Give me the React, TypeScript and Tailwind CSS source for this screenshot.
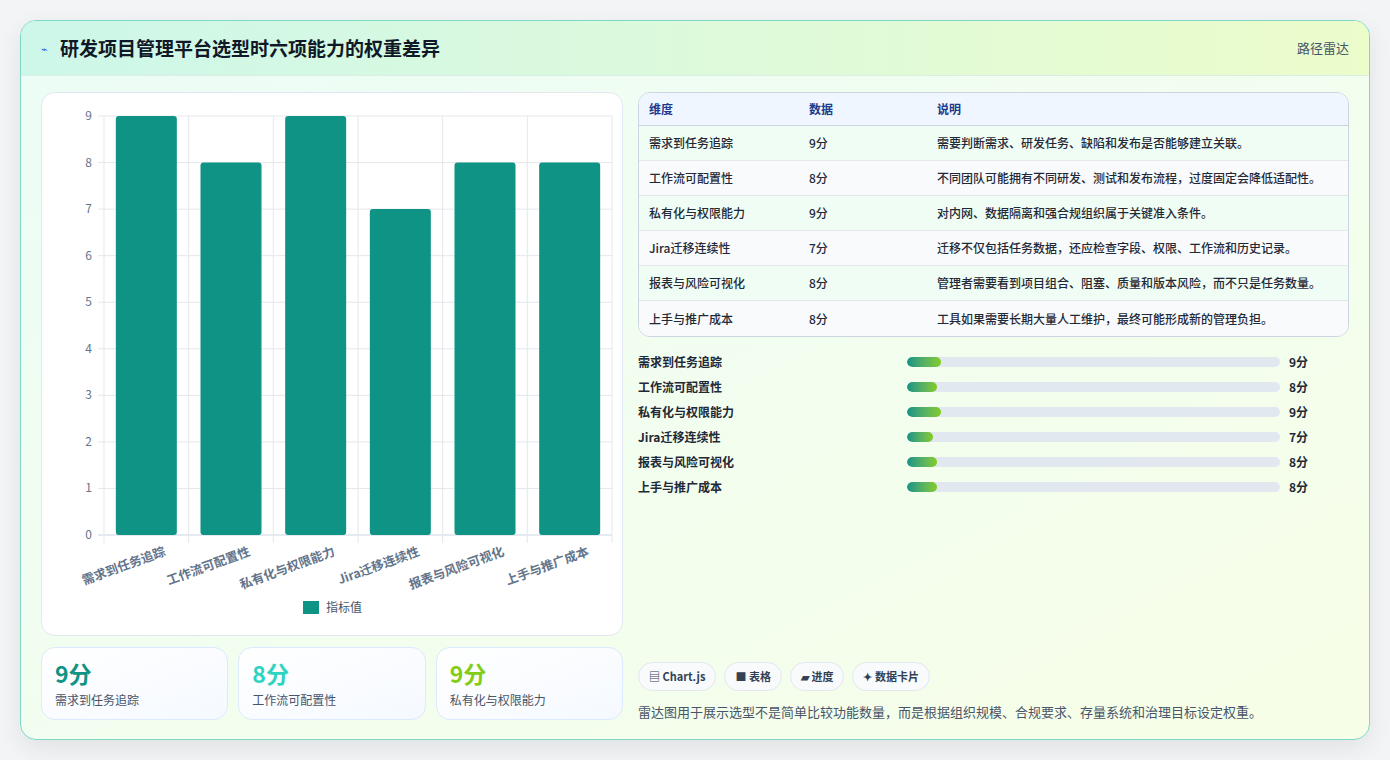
import React from "react";

const data = [
  { n: "需求到任务追踪", v: 9, d: "需要判断需求、研发任务、缺陷和发布是否能够建立关联。" },
  { n: "工作流可配置性", v: 8, d: "不同团队可能拥有不同研发、测试和发布流程，过度固定会降低适配性。" },
  { n: "私有化与权限能力", v: 9, d: "对内网、数据隔离和强合规组织属于关键准入条件。" },
  { n: "Jira迁移连续性", v: 7, d: "迁移不仅包括任务数据，还应检查字段、权限、工作流和历史记录。" },
  { n: "报表与风险可视化", v: 8, d: "管理者需要看到项目组合、阻塞、质量和版本风险，而不只是任务数量。" },
  { n: "上手与推广成本", v: 8, d: "工具如果需要长期大量人工维护，最终可能形成新的管理负担。" },
];

const font = { fontFamily: '"Noto Sans CJK SC", "Noto Sans", sans-serif' };

function Chart() {
  const L = 62, R = 570, T = 23, B = 442;
  const unit = (B - T) / 9;
  const cw = (R - L) / 6;
  return (
    <svg width="582" height="544" viewBox="0 0 582 544" style={font}>
      {Array.from({ length: 10 }).map((_, i) => {
        const y = B - i * unit;
        return (
          <g key={i}>
            <line x1={L - 6} x2={R} y1={y} y2={y} stroke={i === 0 ? "#cbd5e1" : "#e5e7eb"} />
            <text x={L - 12} y={y + 4} textAnchor="end" fontSize="12" fill="#64748b">{i}</text>
          </g>
        );
      })}
      {Array.from({ length: 7 }).map((_, i) => (
        <line key={i} x1={L + i * cw} x2={L + i * cw} y1={T} y2={B + 8} stroke="#e5e7eb" />
      ))}
      {data.map((d, i) => {
        const x = L + i * cw + (cw - 61) / 2;
        const h = d.v * unit;
        return <rect key={i} x={x} y={B - h} width="61" height={h} rx="3" fill="#0e9384" />;
      })}
      {data.map((d, i) => {
        const cx = L + i * cw + cw / 2 + 20;
        return (
          <text key={i} x={cx} y={B + 20} textAnchor="end" fontSize="12.5" fontWeight="600" fill="#64748b"
            transform={`rotate(-20 ${cx} ${B + 20})`}>{d.n}</text>
        );
      })}
      <rect x="261" y="508" width="16" height="13" fill="#0e9384" />
      <text x="284" y="519" fontSize="12" fill="#475569">指标值</text>
    </svg>
  );
}

export default function App() {
  return (
    <div className="w-[1390px] h-[760px] bg-[#f3f4f6] p-5 pb-5" style={font}>
      <div className="h-[720px] rounded-[16px] border border-[#7dd8c6] overflow-hidden flex flex-col shadow-[0_8px_24px_rgba(0,0,0,0.08)] bg-gradient-to-br from-[#ecfdf7] to-[#f7fee7]">
        <div className="h-[55px] shrink-0 flex items-center justify-between px-5 border-b border-[#d9efe6] bg-gradient-to-r from-[#cdf7ea] to-[#ecfccb]">
          <div className="flex items-center gap-3">
            <span className="text-[#2563eb] text-[11px]">⌁</span>
            <span className="text-[19px] font-bold text-[#111827]">研发项目管理平台选型时六项能力的权重差异</span>
          </div>
          <span className="text-[13px] text-[#475569]">路径雷达</span>
        </div>
        <div className="flex gap-[15px] px-5 pt-4 pb-[18px] flex-1">
          <div className="w-[582px] flex flex-col gap-[11px]">
            <div className="h-[544px] rounded-[14px] border border-[#e2e8f0] bg-white">
              <Chart />
            </div>
            <div className="grid grid-cols-3 gap-[10px]">
              {[["#0e9384", 0], ["#2dd4bf", 1], ["#84cc16", 2]].map(([c, i]) => (
                <div key={i as number} className="h-[73px] rounded-[14px] border border-[#dbeafe] bg-gradient-to-br from-white to-[#f5f9ff] px-[13px] pt-[10px]">
                  <div className="text-[23px] font-bold leading-[30px]" style={{ color: c as string }}>{data[i as number].v}分</div>
                  <div className="text-[12px] text-[#475569] mt-[3px]">{data[i as number].n}</div>
                </div>
              ))}
            </div>
          </div>
          <div className="flex-1 flex flex-col">
            <div className="rounded-[12px] border border-[#cbd5e1] overflow-hidden bg-white text-[12px]">
              <div className="flex h-[33px] items-center bg-[#eff6ff] border-b border-[#cbd5e1] text-[#1e3a8a] font-semibold">
                <div className="w-[170px] pl-[10px]">维度</div>
                <div className="w-[128px]">数据</div>
                <div>说明</div>
              </div>
              {data.map((d, i) => (
                <div key={i} className={`flex h-[35px] items-center text-[#1f2937] font-medium ${i < 5 ? "border-b border-[#e5e7eb]" : ""} ${i % 2 === 0 ? "bg-[#f0fdf4]" : "bg-[#f8fafc]"}`}>
                  <div className="w-[170px] pl-[10px]">{d.n}</div>
                  <div className="w-[128px]">{d.v}分</div>
                  <div>{d.d}</div>
                </div>
              ))}
            </div>
            <div className="mt-[12px] flex flex-col">
              {data.map((d, i) => (
                <div key={i} className="h-[25px] flex items-center text-[12px] font-semibold text-[#1f2937]">
                  <div className="w-[269px]">{d.n}</div>
                  <div className="w-[373px] h-[10px] rounded-full bg-[#e2e8f0] overflow-hidden">
                    <div className="h-full rounded-full bg-gradient-to-r from-[#0e9384] to-[#84cc16]" style={{ width: `${d.v}%` }} />
                  </div>
                  <div className="ml-[9px] text-[12px] font-bold">{d.v}分</div>
                </div>
              ))}
            </div>
            <div className="flex-1" />
            <div className="flex gap-[8px] text-[11px] font-semibold text-[#334155]">
              {["▤ Chart.js", "■ 表格", "▰ 进度", "✦ 数据卡片"].map(t => (
                <div key={t} className="h-[29px] px-[10px] flex items-center rounded-full border border-[#e2e8f0] bg-[#f8fafc]">{t}</div>
              ))}
            </div>
            <div className="mt-[11px] text-[13px] text-[#475569]">雷达图用于展示选型不是简单比较功能数量，而是根据组织规模、合规要求、存量系统和治理目标设定权重。</div>
          </div>
        </div>
      </div>
    </div>
  );
}
